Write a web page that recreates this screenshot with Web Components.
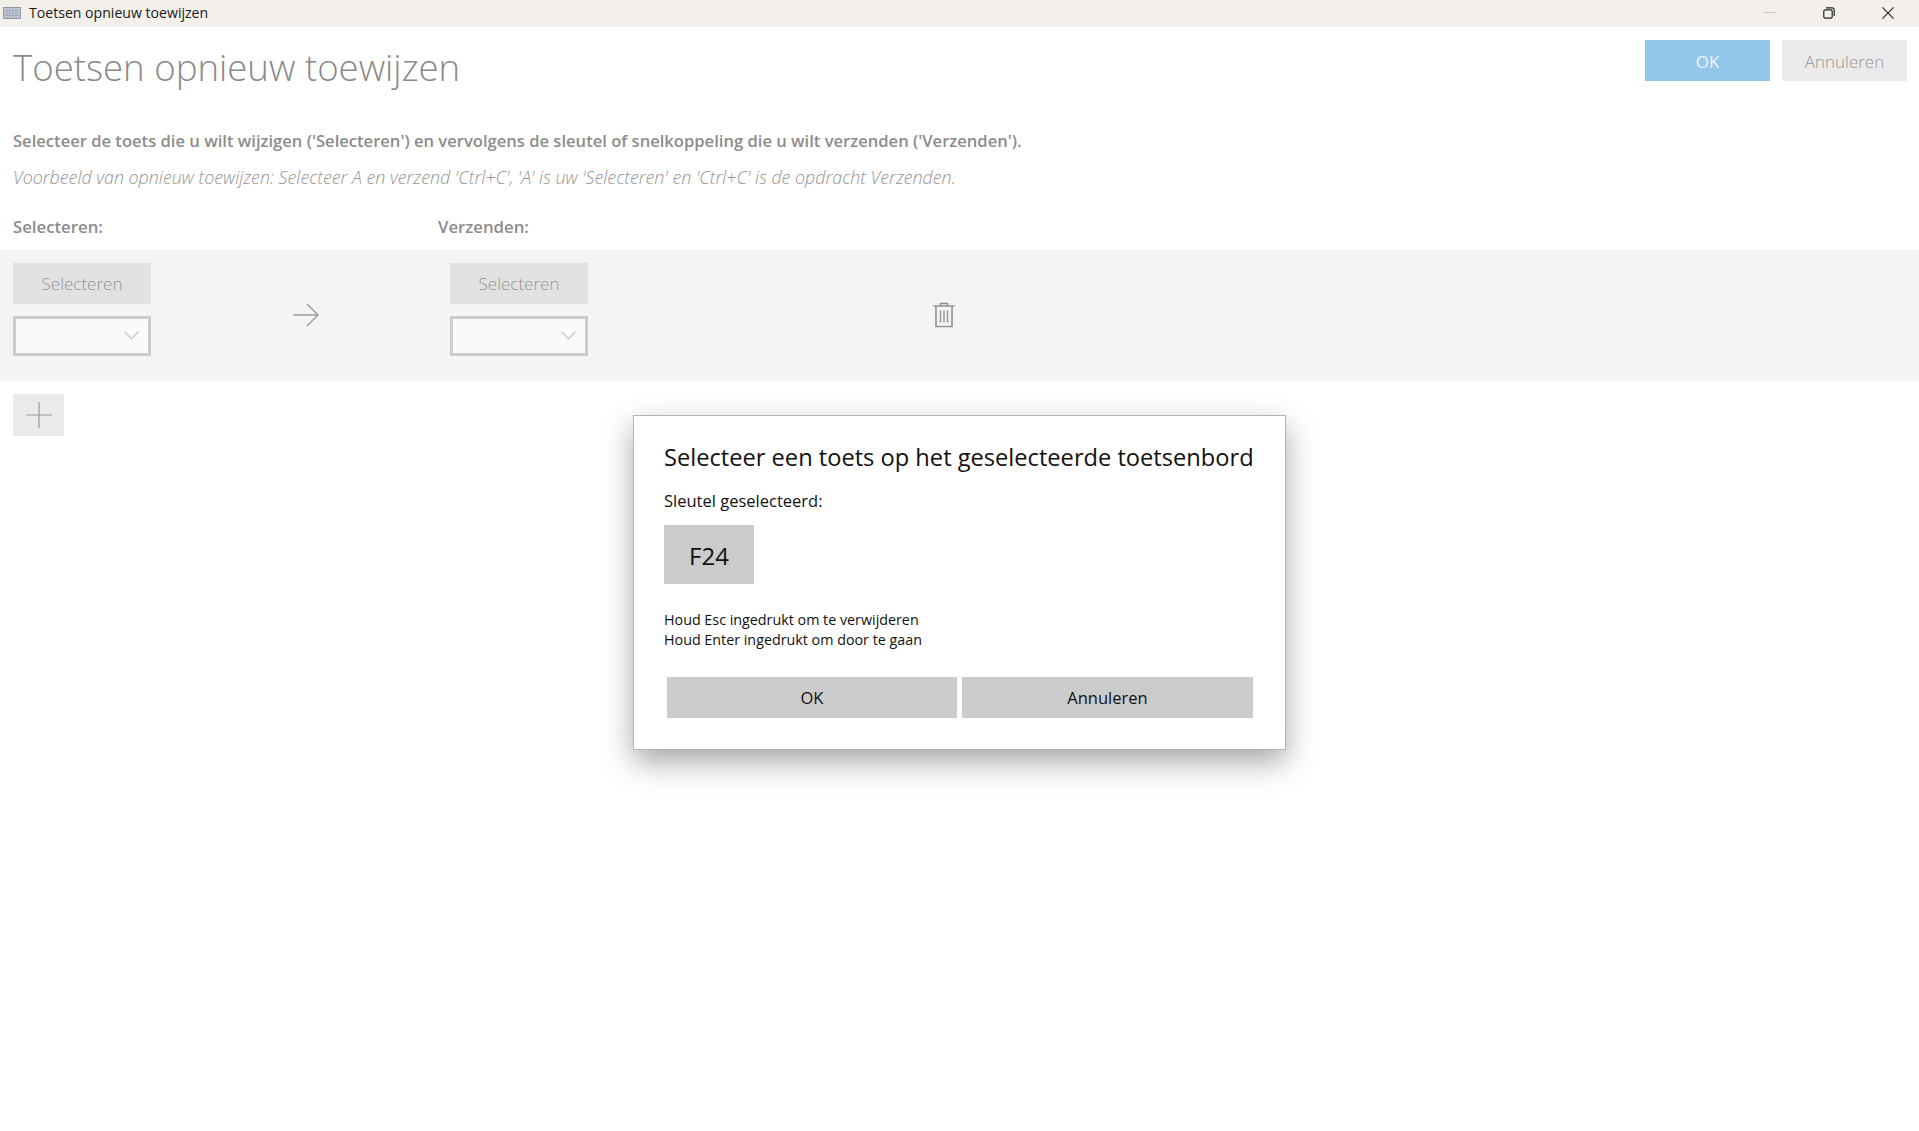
<!DOCTYPE html>
<html lang="nl">
<head>
<meta charset="utf-8">
<title>Toetsen opnieuw toewijzen</title>
<style>
  html, body { margin: 0; height: 100%; background: #fff; }
  body { font-family: "Open Sans", "Noto Sans", sans-serif; }
</style>
</head>
<body>
<remap-window>
  <remap-row></remap-row>
  <key-dialog slot="dialog" key-name="F24"></key-dialog>
</remap-window>

<script>
const titleBarTemplate = document.createElement('template');
titleBarTemplate.innerHTML = `
<style>
  :host { display: flex; align-items: center; height: 27px; box-sizing: border-box; padding-bottom: 2px; background: #f3f0eb; color: #1a1a1a; font-size: 14.1px; }
  .icon { margin-left: 3px; width: 18px; height: 12px; }
  .title { margin-left: 8px; flex: 1; }
  .controls { display: flex; align-items: center; margin-right: 25px; gap: 47px; }
  svg { display: block; }
</style>
<svg class="icon" viewBox="0 0 18 12" fill="none">
  <rect x=".5" y=".5" width="17" height="11" fill="#c3ccd8" stroke="#8c99aa"/>
  <path d="M1 3.5h16M1 6h16M1 8.5h16M4 1v10M7 1v10M10 1v10M13 1v10" stroke="#8f9cad" stroke-width=".6"/>
</svg>
<span class="title"><slot></slot></span>
<div class="controls">
  <svg width="12" height="12" viewBox="0 0 12 12"><path d="M0 5.5h12" stroke="#c9c6c2"/></svg>
  <svg width="12" height="12" viewBox="0 0 12 12" fill="none" stroke="#222" stroke-width="1.2"><rect x=".8" y="2.8" width="8.4" height="8.4" rx="1.5"/><path d="M3 .8h6.2a2 2 0 0 1 2 2V9"/></svg>
  <svg width="12" height="12" viewBox="0 0 12 12" fill="none" stroke="#222" stroke-width="1.1"><path d="M.4.4l11.2 11.2M11.6.4L.4 11.6"/></svg>
</div>
`;

class TitleBar extends HTMLElement {
  constructor() {
    super();
    this.attachShadow({mode: 'open'});
    this.shadowRoot.appendChild(titleBarTemplate.content.cloneNode(true));
  }
}
customElements.define('title-bar', TitleBar);

const flatButtonTemplate = document.createElement('template');
flatButtonTemplate.innerHTML = `
<style>
  :host { display: flex; align-items: center; justify-content: center; height: 41px; box-sizing: border-box; padding-top: var(--button-nudge, 1px);
          font-size: var(--button-size, 17px); background: var(--button-bg, #e2e2e2); color: var(--button-color, #939393); font-weight: var(--button-weight, 300); }
</style>
<slot></slot>
`;

class FlatButton extends HTMLElement {
  constructor() {
    super();
    this.attachShadow({mode: 'open'});
    this.shadowRoot.appendChild(flatButtonTemplate.content.cloneNode(true));
  }
}
customElements.define('flat-button', FlatButton);

const keyComboTemplate = document.createElement('template');
keyComboTemplate.innerHTML = `
<style>
  :host { display: flex; align-items: center; justify-content: flex-end; box-sizing: border-box; height: 40px;
          background: #fafafa; border: 3px solid #cccccc; padding-right: 9px; }
  svg { display: block; }
</style>
<svg width="15" height="9" viewBox="0 0 15 9" fill="none" stroke="#c2c2c2" stroke-width="1.1"><path d="M.5.5l7 7.5 7-7.5"/></svg>
`;

class KeyCombo extends HTMLElement {
  constructor() {
    super();
    this.attachShadow({mode: 'open'});
    this.shadowRoot.appendChild(keyComboTemplate.content.cloneNode(true));
  }
}
customElements.define('key-combo', KeyCombo);

const remapRowTemplate = document.createElement('template');
remapRowTemplate.innerHTML = `
<style>
  :host { display: grid; grid-template-columns: 138px 299px 138px 1fr; align-items: center; height: 131px;
          box-sizing: border-box; padding-left: 13px; background: #f4f4f4; }
  .picker { display: flex; flex-direction: column; gap: 12px; align-self: start; margin-top: 13px; }
  .arrow { display: block; justify-self: center; margin-left: 10px; }
  .trash { display: block; margin-left: 345px; }
</style>
<div class="picker"><flat-button>Selecteren</flat-button><key-combo></key-combo></div>
<svg class="arrow" width="26" height="24" viewBox="0 0 26 24" fill="none" stroke="#9a9a9a" stroke-width="1.4"><path d="M.5 12h24M14 1l11 11-11 11"/></svg>
<div class="picker"><flat-button>Selecteren</flat-button><key-combo></key-combo></div>
<svg class="trash" width="22" height="26" viewBox="0 0 22 26" fill="none" stroke="#929292" stroke-width="1.6"><path d="M.5 4h21M7.5 4V1.5h7V4M3 4v20.5h16V4"/><path d="M7.5 8.5v12M11 8.5v12M14.5 8.5v12" stroke-width="1.4"/></svg>
`;

class RemapRow extends HTMLElement {
  constructor() {
    super();
    this.attachShadow({mode: 'open'});
    this.shadowRoot.appendChild(remapRowTemplate.content.cloneNode(true));
  }
}
customElements.define('remap-row', RemapRow);

const keyDialogTemplate = document.createElement('template');
keyDialogTemplate.innerHTML = `
<style>
  :host { display: block; width: 653px; height: 335px; box-sizing: border-box; padding: 24px 30px 0 30px; background: #fff; color: #111;
          border: 1px solid #b5b5b5; box-shadow: 0 12px 28px rgba(0,0,0,.35); }
  h2 { margin: 0; font-size: 23.65px; font-weight: 400; line-height: 34px; white-space: nowrap; }
  .label { margin-top: 16px; font-size: 16.5px; line-height: 22px; }
  .key { display: flex; align-items: center; justify-content: center; width: 90px; height: 59px; margin-top: 13px;
         box-sizing: border-box; padding-top: 2px; background: #cbcbcb; font-size: 24px; }
  .hint { margin-top: 26px; font-size: 14.3px; line-height: 20px; }
  .buttons { display: grid; grid-template-columns: 290px 291px; gap: 5px; margin: 27px 0 0 3px;
             --button-bg: #cbcbcb; --button-color: #111; --button-weight: 400; --button-size: 16.5px; --button-nudge: 0px; }
</style>
<h2>Selecteer een toets op het geselecteerde toetsenbord</h2>
<div class="label">Sleutel geselecteerd:</div>
<div class="key"></div>
<div class="hint">Houd Esc ingedrukt om te verwijderen<br>Houd Enter ingedrukt om door te gaan</div>
<div class="buttons"><flat-button>OK</flat-button><flat-button>Annuleren</flat-button></div>
`;

class KeyDialog extends HTMLElement {
  constructor() {
    super();
    this.attachShadow({mode: 'open'});
    this.shadowRoot.appendChild(keyDialogTemplate.content.cloneNode(true));
    this.shadowRoot.querySelector('.key').textContent = this.getAttribute('key-name') || '';
  }
}
customElements.define('key-dialog', KeyDialog);

const remapWindowTemplate = document.createElement('template');
remapWindowTemplate.innerHTML = `
<style>
  :host { display: block; position: relative; height: 1131px; overflow: hidden; background: #fff; }
  header { display: flex; justify-content: space-between; padding: 13px 12px 0 13px; }
  h1 { margin: -3px 0 3px; font-size: 36.6px; font-weight: 300; line-height: 60px; color: #8a8a8a; }
  .actions { display: flex; gap: 12px; }
  .actions flat-button { width: 125px; --button-bg: #ebebeb; }
  .actions flat-button.primary { --button-bg: #93c6ea; --button-color: #eef7fd; --button-weight: 400; }
  .intro { margin: 0; padding: 0 13px; font-size: 16.58px; line-height: 22px; }
  .lead { margin-top: 29.5px; font-weight: 600; color: #8c8c8c; }
  .sample { margin-top: 14px; font-size: 17.85px; font-style: italic; font-weight: 300; color: #949494; }
  .labels { display: grid; grid-template-columns: 425px 1fr; margin-top: 28px; padding: 0 13px; height: 34px;
            font-size: 16.75px; line-height: 22px; font-weight: 600; color: #8c8c8c; }
  .add { display: flex; align-items: center; justify-content: center; width: 51px; height: 42px; margin: 13px 0 0 13px; background: #ebebeb; }
  .add svg { display: block; }
  .dialog { position: absolute; left: 633px; top: 415px; }
</style>
<title-bar>Toetsen opnieuw toewijzen</title-bar>
<header>
  <h1>Toetsen opnieuw toewijzen</h1>
  <div class="actions"><flat-button class="primary">OK</flat-button><flat-button>Annuleren</flat-button></div>
</header>
<p class="intro lead">Selecteer de toets die u wilt wijzigen ('Selecteren') en vervolgens de sleutel of snelkoppeling die u wilt verzenden ('Verzenden').</p>
<p class="intro sample">Voorbeeld van opnieuw toewijzen: Selecteer A en verzend 'Ctrl+C', 'A' is uw 'Selecteren' en 'Ctrl+C' is de opdracht Verzenden.</p>
<div class="labels"><span>Selecteren:</span><span>Verzenden:</span></div>
<slot></slot>
<div class="add"><svg width="26" height="26" viewBox="0 0 26 26" stroke="#9a9a9a" stroke-width="1.2"><path d="M0 13h26M13 0v26"/></svg></div>
<div class="dialog"><slot name="dialog"></slot></div>
`;

class RemapWindow extends HTMLElement {
  constructor() {
    super();
    this.attachShadow({mode: 'open'});
    this.shadowRoot.appendChild(remapWindowTemplate.content.cloneNode(true));
  }
}
customElements.define('remap-window', RemapWindow);
</script>
</body>
</html>
